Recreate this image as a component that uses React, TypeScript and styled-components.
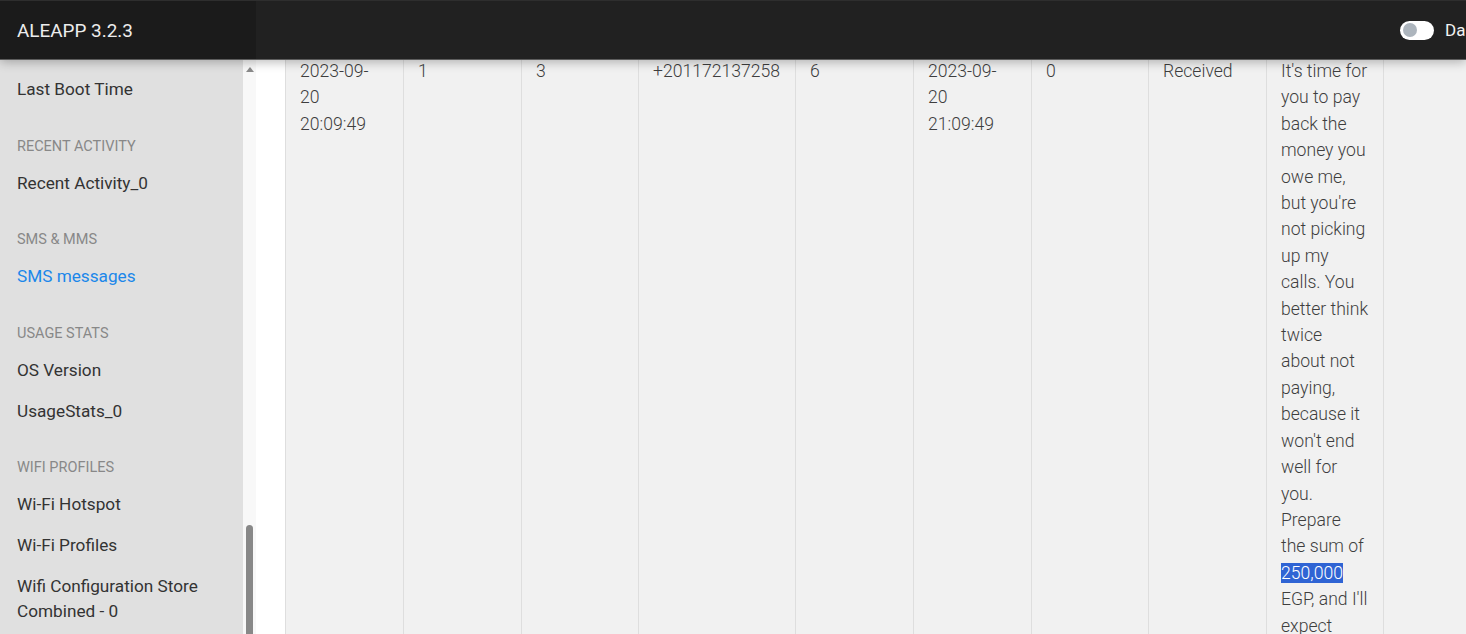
import * as React from 'react';
import styled, {createGlobalStyle} from 'styled-components';

const GlobalStyle = createGlobalStyle`
  html, body {
    margin: 0;
    padding: 0;
    overflow: hidden;
    background: #ffffff;
    font-family: Roboto, "Noto Sans", "Liberation Sans", sans-serif;
  }
`;

const Page = styled.div`
  display: grid;
  grid-template-rows: 60px 1fr;
  height: 100vh;
  width: 100vw;
  overflow: hidden;
`;

const TopBar = styled.header`
  position: relative;
  z-index: 2;
  display: flex;
  background: #212121;
  border-top: 1px solid #2e2e2e;
  border-bottom: 1px solid #5c5c5c;
  box-shadow: 0 2px 10px rgba(0, 0, 0, 0.28);
  box-sizing: border-box;
`;

const Brand = styled.div`
  width: 256px;
  flex-shrink: 0;
  display: flex;
  align-items: center;
  padding-left: 17px;
  box-sizing: border-box;
  background: #1b1b1b;
  color: #ededed;
  font-size: 18.9px;
`;

const BarRest = styled.div`
  flex: 1;
  display: flex;
  align-items: center;
`;

const ModeSwitch = styled.label`
  margin-left: auto;
  width: 66px;
  display: flex;
  align-items: center;
  gap: 11px;
  white-space: nowrap;
  color: #f2f2f2;
  font-size: 17px;
`;

const Track = styled.span`
  flex-shrink: 0;
  width: 34px;
  height: 19px;
  border-radius: 10px;
  background: #ffffff;
  display: flex;
  align-items: center;
  padding: 0 3px;
  box-sizing: border-box;
`;

const Knob = styled.span`
  width: 14px;
  height: 14px;
  border-radius: 50%;
  background: #adb5bd;
`;

const Body = styled.div`
  display: flex;
  min-height: 0;
`;

const Sidebar = styled.aside`
  width: 256px;
  flex-shrink: 0;
  display: flex;
`;

const NavList = styled.nav`
  flex: 1;
  background: #e0e0e0;
  padding-top: 9px;
  overflow: hidden;
`;

const SectionTitle = styled.div`
  padding: 27.5px 17px 7px;
  font-size: 14.5px;
  line-height: 18px;
  color: #888888;
  text-transform: uppercase;
`;

const NavItem = styled.a<{ $active?: boolean }>`
  display: block;
  padding: 8px 17px;
  font-size: 17.2px;
  line-height: 25px;
  color: ${p => (p.$active ? '#1b87ea' : '#333333')};
  text-decoration: none;
`;

const ScrollTrack = styled.div`
  width: 13px;
  background: #f8f8f8;
  display: flex;
  flex-direction: column;
  align-items: center;
`;

const ScrollArrow = styled.span`
  margin-top: 7px;
  width: 0;
  height: 0;
  border-left: 4px solid transparent;
  border-right: 4px solid transparent;
  border-bottom: 5px solid #8a8a8a;
`;

const ScrollGap = styled.div`
  flex: 1;
`;

const ScrollThumb = styled.div`
  width: 7px;
  height: 109px;
  border-radius: 4px 4px 0 0;
  background: #888888;
`;

const Main = styled.main`
  flex: 1;
  background: #ffffff;
  padding-left: 29px;
  overflow: hidden;
`;

const Row = styled.div`
  display: grid;
  grid-template-columns: 118px 118px 117px 157px 118px 118px 117px 118px 117px 1fr;
  margin-top: -2px;
  min-height: 100%;
`;

const Cell = styled.div<{ $nowrap?: boolean; $wide?: boolean }>`
  background: #f1f1f1;
  border-left: 1px solid #dedede;
  padding: 0 ${p => (p.$wide ? '14px' : '15px')} 0 14px;
  font-size: 17.6px;
  line-height: 26.4px;
  font-weight: 300;
  color: #3e3e3e;
  white-space: ${p => (p.$nowrap ? 'nowrap' : 'normal')};
  overflow-wrap: break-word;
`;

const Mark = styled.span`
  background: #2f64d4;
  color: #ffffff;
`;

const sections: { title?: string; items: { label: string; active?: boolean }[] }[] = [
  {items: [{label: 'Last Boot Time'}]},
  {title: 'Recent Activity', items: [{label: 'Recent Activity_0'}]},
  {title: 'SMS & MMS', items: [{label: 'SMS messages', active: true}]},
  {title: 'Usage Stats', items: [{label: 'OS Version'}, {label: 'UsageStats_0'}]},
  {
    title: 'Wifi Profiles',
    items: [
      {label: 'Wi-Fi Hotspot'},
      {label: 'Wi-Fi Profiles'},
      {label: 'Wifi Configuration Store Combined - 0'},
    ],
  },
];

const cells = ['2023-09-20 20:09:49', '1', '3', '+201172137258', '6', '2023-09-20 21:09:49', '0', 'Received'];

export default function App() {
  return (
    <Page>
      <GlobalStyle/>
      <TopBar>
        <Brand>ALEAPP 3.2.3</Brand>
        <BarRest>
          <ModeSwitch>
            <Track><Knob/></Track>
            Dark mode
          </ModeSwitch>
        </BarRest>
      </TopBar>
      <Body>
        <Sidebar>
          <NavList>
            {sections.map((s, i) => (
              <React.Fragment key={i}>
                {s.title && <SectionTitle>{s.title}</SectionTitle>}
                {s.items.map(it => (
                  <NavItem key={it.label} $active={it.active}>{it.label}</NavItem>
                ))}
              </React.Fragment>
            ))}
          </NavList>
          <ScrollTrack>
            <ScrollArrow/>
            <ScrollGap/>
            <ScrollThumb/>
          </ScrollTrack>
        </Sidebar>
        <Main>
          <Row>
            {cells.map((c, i) => <Cell key={i} $nowrap={c.startsWith('+')}>{c}</Cell>)}
            <Cell $wide>
              It's time for you to pay back the money you owe me, but you're not picking up my
              calls. You better think twice about not paying, because it won't end well for you.
              Prepare the sum of <Mark>250,000</Mark> EGP, and I'll expect payment by tomorrow.
            </Cell>
            <Cell/>
          </Row>
        </Main>
      </Body>
    </Page>
  );
}
